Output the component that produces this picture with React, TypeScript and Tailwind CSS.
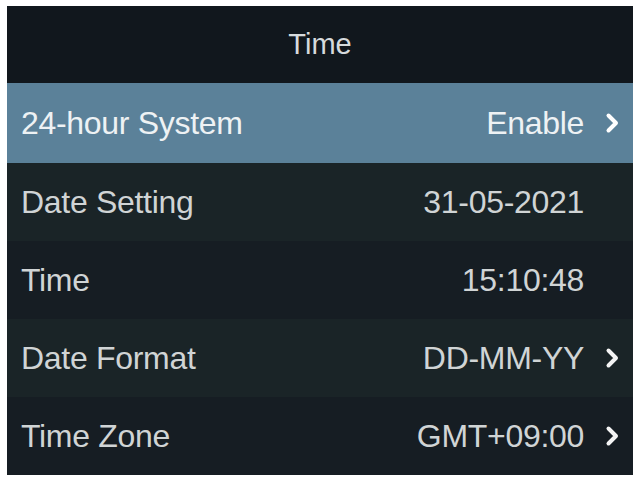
const rows = [
  { label: '24-hour System', value: 'Enable', arrow: true, active: true, bg: 'bg-[#5b8199]' },
  { label: 'Date Setting', value: '31-05-2021', arrow: false, active: false, bg: 'bg-[#1a2427]' },
  { label: 'Time', value: '15:10:48', arrow: false, active: false, bg: 'bg-[#161d23]' },
  { label: 'Date Format', value: 'DD-MM-YY', arrow: true, active: false, bg: 'bg-[#1a2427]' },
  { label: 'Time Zone', value: 'GMT+09:00', arrow: true, active: false, bg: 'bg-[#161d23]' },
]

const Chevron = () => (
  <svg width="17" height="22" viewBox="0 0 17 22" fill="none" className="shrink-0">
    <path d="M4.5 3.5l7.5 7.5-7.5 7.5" stroke="currentColor" strokeWidth="4" strokeLinecap="round" strokeLinejoin="round" />
  </svg>
)

export default function App() {
  return (
    <div className="w-[637px] h-[482px] bg-white pt-[6px] pl-[7px] font-['Liberation_Sans',Arial,sans-serif]">
      <div className="w-[626px] h-[470px] flex flex-col overflow-hidden">
        <div className="h-[77px] bg-[#11171d] flex items-center justify-center text-[29px] text-[#d6dadc]">
          Time
        </div>
        {rows.map(r => (
          <div
            key={r.label}
            className={`flex items-center pl-[14px] pr-[12px] text-[32px] ${r.bg} ${r.active ? 'h-[80px] text-[#eef2f4]' : 'h-[78px] text-[#d0d4d5]'}`}
          >
            <span className="flex-1 tracking-[-0.3px]">{r.label}</span>
            <span className="pr-[2px] tracking-[-0.3px]">{r.value}</span>
            <span className={`w-[35px] flex justify-end ${r.active ? 'text-white' : 'text-[#f4f4f4]'}`}>
              {r.arrow && <Chevron />}
            </span>
          </div>
        ))}
      </div>
    </div>
  )
}
